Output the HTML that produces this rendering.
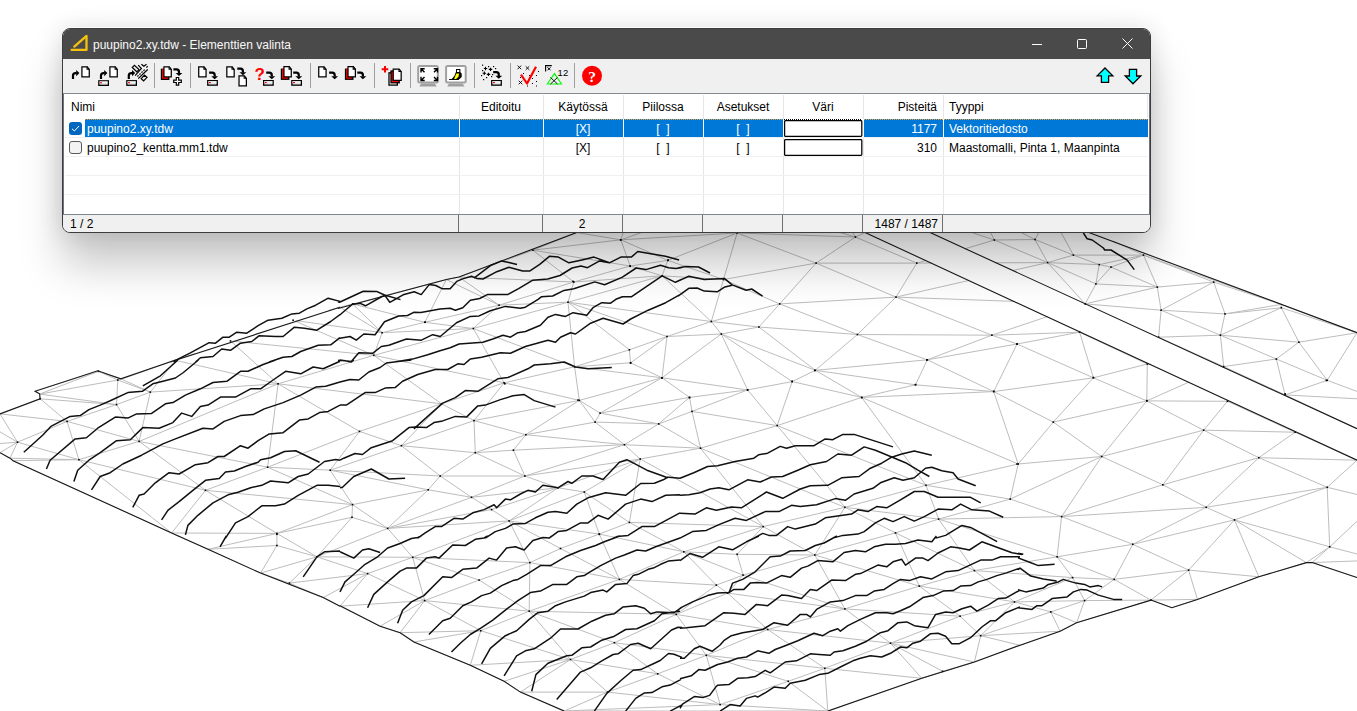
<!DOCTYPE html>
<html><head><meta charset="utf-8">
<style>
html,body{margin:0;padding:0;width:1357px;height:711px;overflow:hidden;background:#fff;}
body{position:relative;font-family:"Liberation Sans",sans-serif;}
.abs{position:absolute;}
#mesh{position:absolute;left:0;top:0;}
#win{position:absolute;left:62px;top:28px;width:1087px;height:203px;border:1px solid #3c3c3c;border-radius:8px;
 box-shadow:0 -1px 0 rgba(255,255,255,0.8),0 32px 44px rgba(0,0,0,0.22),0 0 24px rgba(0,0,0,0.12);background:#f0f0f0;overflow:hidden;}
#title{position:absolute;left:0;top:0;width:1087px;height:30px;background:#4a4a4a;}
#ttext{position:absolute;left:30px;top:9px;color:#f8f8f8;font-size:12px;white-space:nowrap;}
#tb{position:absolute;left:0;top:30px;width:1087px;height:34px;background:#f0f0f0;border-bottom:1px solid #868a93;}
#list{position:absolute;left:0;top:65px;width:1087px;height:120px;background:#fff;}
#status{position:absolute;left:0;top:185px;width:1087px;height:18px;background:#f0f0f0;border-top:1px solid #80848c;}
.t{position:absolute;font-size:12px;white-space:nowrap;color:#000;line-height:14px;}
.vs{position:absolute;width:1px;background:#e6e6e6;}
.hs{position:absolute;height:1px;background:#f0f0f0;}
.sep{position:absolute;width:1px;background:#a0a0a0;top:4px;height:25px;}
</style></head><body>

<svg id="mesh" width="1357" height="711" viewBox="0 0 1357 711">
<path fill="none" stroke="#bdbdbd" stroke-width="1" d="M861.7 397.4 L926 485.3 M232.9 341.2 L373.8 355.3 M980.7 635.7 L1050.8 611.9 M662 377.8 L689.5 397.4 M529.9 562.6 L560.5 548.5 M316.9 556.8 L387.6 528.4 M1206.2 507.3 L1061.6 516.6 M980.7 635.7 L1060.1 631.2 M278.1 383.8 L267.6 467.2 M991.9 335.2 L1047.7 316.5 M1084.6 304.1 L1085.2 303.9 M692 411.4 L777.2 425.6 M1357 332.7 L1357.5 334.2 M1147.3 364 L1150.7 364.2 M1220.3 366.4 L1223.7 366.6 M1099.2 264.6 L1111 267.1 M921.8 678.3 L827.8 711 M676.2 614.4 L767.7 629.5 M619.4 579.4 L716.3 585.1 M150.3 392.1 L175.4 360.3 M474 420.6 L441.5 403.8 M614.4 642.7 L570.5 659.5 M1111 267.1 L1095.9 283.9 M1327.2 380.3 L1357 332.7 M1111 267.1 L1143.5 255.1 M599.3 534.1 L683.8 551.8 M570.5 659.5 L657.7 673.8 M844.9 507.3 L763.2 526.6 M479.1 580.1 L529.2 611.2 M17.5 442.2 L-20 445 M513.4 450.2 L624.4 444.7 M1327.2 487.3 L1329.7 546.8 M584.3 492 L629.4 522.4 M1188.6 570.1 L1258.8 576.8 M78.9 459.7 L171.6 533 M1146.8 400.9 L1053.3 422.1 M1220.4 335.2 L1158.6 337.2 M1146.8 400.9 L1227.5 401.3 M400.1 632.7 L380.1 626.2 M624.4 444.7 L640.2 459 M816.1 263.1 L916.8 263.1 M570.5 659.5 L504.1 681.3 M1298.9 342.2 L1276.3 359 M792.2 381.6 L777.2 425.6 M816.1 263.1 L723.5 279.5 M599.3 534.1 L619.4 579.4 M916.8 263.1 L896 297.1 M424.8 322.3 L382.1 332.7 M630.2 266 L667.8 260.4 M890.5 643.2 L942.6 671.3 M17.5 442.2 L0 452.7 M13 460.7 L10 458.2 M573.8 282 L459 277 M991.9 335.2 L927.3 359.8 M861.7 397.4 L1018.2 464 M1146.8 400.9 L1147.3 364 M316.9 556.8 L352 517.3 M1220.4 335.2 L1281.3 307.7 M10 458.2 L0 452.7 M382.1 332.7 L473.3 328.5 M573.8 282 L568 302.2 M640.2 459 L763.2 526.6 M792.2 381.6 L861.7 397.4 M116.5 404.6 L40.1 398.8 M896 297.1 L969.6 280.3 M1012 270.7 L1047.6 262.6 M558 487.8 L509.1 520.9 M683.8 551.8 L716.3 585.1 M276.9 545.5 L208 549.3 M1203.7 430.2 L1258.8 457.7 M524.9 476 L558 487.8 M479.1 580.1 L424.7 600.6 M1101.7 456.5 L1162.8 484.8 M667.8 260.4 L723.5 279.5 M844.9 507.3 L814.8 555 M630 212 L700 212 M579.3 400.4 L600.1 413.1 M584.3 492 L509.1 520.9 M620.8 239.8 L630 212 M573.8 282 L630.2 266 M619.4 579.4 L529.2 611.2 M640.2 459 L700.5 448.2 M1035 239.5 L1047.6 262.6 M570.5 659.5 L520.4 692.1 M716.3 585.1 L727.6 593.1 M595.1 422.1 L624.4 444.7 M205.5 490.3 L276.9 533.4 M1234.5 519.9 L1329.7 546.8 M171.6 533 L13 460.7 M558 487.8 L584.3 492 M599.3 534.1 L560.5 548.5 M424.8 322.3 L499.1 305.2 M614.4 642.7 L676.2 614.4 M1093.4 377.8 L1146.8 400.9 M824.8 668.3 L827.8 711 M1018.2 464 L1010.2 499.1 M857.4 334.5 L991.9 335.2 M1157.3 287.1 L1161.1 310.2 M629.4 349.8 L574.6 366.8 M446.4 279.5 L459 277 M974.4 570.6 L1057.1 556.8 M1010.2 499.1 L1061.6 516.6 M513.4 450.2 L524.9 476 M991.9 335.2 L1017 344 M788.2 681.3 L720.1 704.6 M78.9 459.7 L205.5 490.3 M1114.2 579.4 L1151 600.1 M267.6 467.2 L359.5 431.4 M440.2 476 L471.5 497.3 M382.1 332.7 L373.8 355.3 M600.1 413.1 L689.5 397.4 M629.4 522.4 L599.3 534.1 M1084.6 600.6 L1050.8 611.9 M994.4 240 L1035 239.5 M116.5 404.6 L150.3 392.1 M1234.5 519.9 L1258.8 576.8 M683.8 551.8 L743.1 575.1 M915.5 384.8 L993.7 391.6 M558 487.8 L491.6 509.6 M276.9 545.5 L260.6 573.1 M1203.7 430.2 L1101.7 456.5 M662.1 275.8 L568 302.2 M1035 239.5 L1050 212 M524.9 476 L471.5 497.3 M662 377.8 L579.3 400.4 M657.7 673.8 L706.3 655.3 M993.7 391.6 L861.7 397.4 M938.6 519.1 L974.4 570.6 M667 336.5 L721.3 334 M662 377.8 L574.6 366.8 M267.6 467.2 L330.2 470.2 M579.3 400.4 L504.1 382.8 M560.5 548.5 L619.4 579.4 M1010.2 499.1 L1101.7 456.5 M938.6 519.1 L1061.6 516.6 M441.5 403.8 L401.4 445.7 M777.2 425.6 L700.5 448.2 M1017 344 L1093.4 377.8 M330.2 470.2 L352.5 504.6 M1223.7 366.6 L1223.9 368.1 M1227.3 399.6 L1227.5 401.3 M620.8 239.8 L737.1 233 M116.5 404.6 L139.1 441.4 M815.3 370.3 L915.5 384.8 M607.6 692.1 L564.3 711 M779.7 303.9 L723.5 279.5 M276.9 533.4 L352 517.3 M564.3 711 L520.4 692.1 M412.7 557.3 L529.9 562.6 M359.5 431.4 L401.4 445.7 M994.4 240 L910 212 M844.9 608.9 L919.3 586.1 M1157.3 287.1 L1085.2 303.9 M620.8 239.8 L576.8 232.5 M640.2 459 L524.9 476 M1162.8 484.8 L1061.6 516.6 M1114.2 579.4 L1084.6 600.6 M1073.4 255.1 L1143.5 255.1 M1061.6 516.6 L1132.8 544.3 M440.2 476 L428.2 489.8 M777.2 425.6 L844.9 507.3 M1050.8 611.9 L1060.1 631.2 M1234.5 519.9 L1188.6 570.1 M779.7 303.9 L758.9 327 M1047.6 262.6 L1095.9 283.9 M1298.9 342.2 L1357 332.7 M1295.1 432.2 L1357 460.2 M1357 577.6 L1357.5 577.2 M1035 239.5 L980 212 M289.4 583.1 L323.2 597.6 M504.1 382.8 L574.6 366.8 M1057.1 556.8 L1072.6 577.6 M855.4 237 L910 212 M1258.8 457.7 L1295.1 432.2 M857.4 334.5 L815.3 370.3 M267.6 467.2 L205.5 490.3 M640.2 459 L584.3 492 M767.7 629.5 L824.8 668.3 M895.5 532.9 L814.8 555 M895.5 532.9 L974.4 570.6 M1014.5 601.9 L1072.6 577.6 M441.5 403.8 L359.5 431.4 M896 297.1 L991.9 335.2 M568 302.2 L574.6 366.8 M1095.9 283.9 L1157.3 287.1 M595.1 422.1 L525.9 434.7 M658.7 423.9 L692 411.4 M743.1 575.1 L844.9 608.9 M657.7 673.8 L607.6 692.1 M919.3 586.1 L960.1 616.2 M367.6 573.6 L323.2 597.6 M276.9 533.4 L352.5 504.6 M276.9 545.5 L316.9 556.8 M1285.1 394.9 L1357.5 398.8 M412.7 557.3 L479.1 580.1 M974.4 570.6 L1014.5 601.9 M938.6 519.1 L895.5 532.9 M844.9 608.9 L890.5 643.2 M1258.8 457.7 L1327.2 487.3 M98.5 371.3 L121.5 379.1 M1017 344 L993.7 391.6 M890.5 643.2 L921.8 678.3 M1162.8 484.8 L1206.2 507.3 M568 302.2 L473.3 328.5 M1151 600.1 L1171.8 607.7 M340 606.2 L323.2 597.6 M1061.6 516.6 L1057.1 556.8 M67.1 421.4 L0 413.9 M991.9 335.2 L1079.6 332.2 M440.2 476 L524.9 476 M1014.5 601.9 L1050.8 611.9 M529.2 611.2 L570.5 659.5 M896 297.1 L779.7 303.9 M330.2 470.2 L440.2 476 M509.1 520.9 L412.7 557.3 M1050.8 611.9 L1076.6 622.7 M667.8 260.4 L662.1 275.8 M473.3 328.5 L504.1 382.8 M779.7 303.9 L711.3 321.5 M814.8 555 L844.9 608.9 M737.1 233 L770 212 M352.7 304 L340 307.2 M747.6 389.9 L689.5 397.4 M480.8 630.7 L570.5 659.5 M352.5 504.6 L352 517.3 M1010.2 499.1 L938.6 519.1 M412.7 557.3 L424.7 600.6 M844.9 608.9 L767.7 629.5 M855.4 237 L840 212 M1161.1 310.2 L1158.6 337.2 M1072.6 577.6 L1114.2 579.4 M352 517.3 L387.6 528.4 M640.2 459 L558 487.8 M1017 344 L927.3 359.8 M737.1 233 L723.5 279.5 M1158.6 337.2 L1223.7 366.6 M620.8 239.8 L630.2 266 M373.8 355.3 L473.3 328.5 M380.1 626.2 L340 606.2 M927.3 359.8 L815.3 370.3 M896 297.1 L857.4 334.5 M474 420.6 L525.9 434.7 M1357 577.6 L1312.2 562.6 M67.1 421.4 L78.9 459.7 M1276.3 359 L1327.2 380.3 M509.1 520.9 L560.5 548.5 M1276.3 359 L1285.1 394.9 M743.1 575.1 L814.8 555 M919.3 586.1 L974.4 570.6 M1327.2 380.3 L1357.5 391.6 M576.8 232.5 L630 212 M700 212 L770 212 M39.6 394.1 L35.1 390.9 M747.6 389.9 L777.2 425.6 M412.7 557.3 L367.6 573.6 M1079.6 332.2 L1147.3 364 M1258.8 457.7 L1162.8 484.8 M352.7 304 L382.1 332.7 M17.5 442.2 L78.9 459.7 M98.5 371.3 L35.1 390.9 M600.1 413.1 L658.7 423.9 M424.7 600.6 L480.8 630.7 M706.3 655.3 L720.1 704.6 M1073.4 255.1 L1099.2 264.6 M1327.2 487.3 L1357 460.2 M1060.1 631.2 L1020 645.3 M1151 600.1 L1197.4 599.4 M529.2 611.2 L614.4 642.7 M824.8 668.3 L890.5 643.2 M150.3 392.1 L121.5 379.1 M1357 428.7 L1357.5 428.1 M926 485.3 L844.9 507.3 M737.1 233 L700 212 M194.4 353.6 L175.4 360.3 M614.4 642.7 L706.3 655.3 M475.3 452.7 L513.4 450.2 M916.8 263.1 L932.2 263 M994.8 262.8 L1047.6 262.6 M17.5 442.2 L-20 420 M1161.1 310.2 L1220.4 335.2 M529.9 562.6 L529.2 611.2 M1018.2 464 L1101.7 456.5 M737.1 233 L816.1 263.1 M721.3 334 L747.6 389.9 M1213.7 282.1 L1281.3 304.4 M278.1 383.8 L373.8 355.3 M529.2 611.2 L676.2 614.4 M474 420.6 L475.3 452.7 M67.1 421.4 L17.5 442.2 M509.1 520.9 L529.9 562.6 M401.4 445.7 L440.2 476 M1276.3 359 L1223.7 366.6 M890.5 643.2 L980.7 635.7 M17.5 442.2 L10 458.2 M475.3 452.7 L524.9 476 M758.9 327 L857.4 334.5 M747.6 389.9 L692 411.4 M1188.6 570.1 L1151 600.1 M1161.1 310.2 L1213.7 282.1 M662 377.8 L721.3 334 M993.7 391.6 L1093.4 377.8 M763.2 526.6 L737.1 554.3 M424.7 600.6 L529.2 611.2 M706.3 655.3 L788.2 681.3 M316.9 556.8 L367.6 573.6 M1073.4 255.1 L1047.6 262.6 M116.5 404.6 L39.6 394.1 M658.7 423.9 L624.4 444.7 M1298.9 342.2 L1281.3 307.7 M205.5 490.3 L171.6 533 M629.4 522.4 L763.2 526.6 M788.2 681.3 L827.8 711 M401.4 445.7 L475.3 452.7 M428.2 489.8 L387.6 528.4 M630.6 362.8 L574.6 366.8 M424.7 600.6 L340 606.2 M504.1 681.3 L470.3 665.3 M504.1 382.8 L441.5 403.8 M382.1 332.7 L340 307.2 M758.9 327 L815.3 370.3 M1327.2 487.3 L1234.5 519.9 M1161.1 310.2 L1225 313.9 M139.1 441.4 L205.5 490.3 M579.3 400.4 L525.9 434.7 M662.1 275.8 L723.5 279.5 M763.2 526.6 L814.8 555 M1076.6 622.7 L1060.1 631.2 M267.6 467.2 L352.5 504.6 M980.7 635.7 L974.4 662 M1035 239.5 L1073.4 255.1 M-20 420 L-20 445 M737.1 554.3 L743.1 575.1 M474 420.6 L401.4 445.7 M260.6 573.1 L208 549.3 M1073.4 255.1 L1050 212 M1227.5 401.3 L1295.1 432.2 M824.8 668.3 L921.8 678.3 M916.8 263.1 L926.2 260.3 M964.6 248.9 L994.4 240 M150.3 392.1 L278.1 383.8 M1132.8 544.3 L1114.2 579.4 M205.5 490.3 L352.5 504.6 M1329.7 546.8 L1357.5 554.1 M1018.2 464 L926 485.3 M844.9 507.3 L895.5 532.9 M1101.7 456.5 L1061.6 516.6 M520.4 692.1 L504.1 681.3 M758.9 327 L721.3 334 M579.3 400.4 L474 420.6 M861.7 397.4 L777.2 425.6 M1085.2 303.9 L1161.1 310.2 M938.6 519.1 L1057.1 556.8 M763.2 526.6 L683.8 551.8 M1146.8 400.9 L1101.7 456.5 M706.3 655.3 L824.8 668.3 M316.9 556.8 L412.7 557.3 M624.4 444.7 L524.9 476 M276.9 533.4 L171.6 533 M816.1 263.1 L779.7 303.9 M1084.6 600.6 L1151 600.1 M1084.6 600.6 L1076.6 622.7 M1329.7 546.8 L1306.4 562.6 M1234.5 519.9 L1306.4 562.6 M619.4 579.4 L683.8 551.8 M683.8 551.8 L737.1 554.3 M700.5 448.2 L763.2 526.6 M630.6 362.8 L662 377.8 M424.8 322.3 L473.3 328.5 M323.2 597.6 L260.6 573.1 M960.1 616.2 L980.7 635.7 M1203.7 430.2 L1295.1 432.2 M711.3 321.5 L721.3 334 M316.9 556.8 L260.6 573.1 M295.2 321.1 L373.8 355.3 M727.6 593.1 L767.7 629.5 M1143.5 255.1 L1112.9 241 M1088.2 229.6 L1050 212 M139.1 441.4 L267.6 467.2 M974.4 570.6 L1072.6 577.6 M579.3 400.4 L574.6 366.8 M1146.8 400.9 L1189.2 382 M1222.1 367.3 L1223.7 366.6 M387.6 528.4 L509.1 520.9 M980.7 635.7 L1020 645.3 M1017 344 L1079.6 332.2 M40.1 398.8 L39.6 394.1 M1099.2 264.6 L1095.9 283.9 M424.8 322.3 L352.7 304 M614.4 642.7 L657.7 673.8 M629.4 349.8 L667 336.5 M150.3 392.1 L139.1 441.4 M499.1 305.2 L459 277 M657.7 673.8 L720.1 704.6 M711.3 321.5 L723.5 279.5 M844.9 507.3 L938.6 519.1 M316.9 556.8 L289.4 583.1 M532.9 250.2 L576.8 232.5 M1085.2 303.9 L1085.1 304.3 M1079.8 331.3 L1079.6 332.2 M1258.8 457.7 L1357 460.2 M1220.4 335.2 L1276.3 359 M1146.8 400.9 L1203.7 430.2 M387.6 528.4 L412.7 557.3 M1220.4 335.2 L1223.7 366.6 M573.8 282 L662.1 275.8 M276.9 533.4 L208 549.3 M816.1 263.1 L896 297.1 M117.8 380 L121.5 379.1 M1234.5 519.9 L1132.8 544.3 M1225 313.9 L1281.3 304.4 M1329.7 546.8 L1312.2 562.6 M700.5 448.2 L844.9 507.3 M17.5 442.2 L0 413.9 M1203.7 430.2 L1227.5 401.3 M711.3 321.5 L758.9 327 M667.8 260.4 L737.1 233 M840 212 L910 212 M857.4 334.5 L927.3 359.8 M993.7 391.6 L1018.2 464 M1312.2 562.6 L1357.5 560.9 M1213.7 282.1 L1143.5 255.1 M121.5 379.1 L175.4 360.3 M667 336.5 L711.3 321.5 M499.1 305.2 L473.3 328.5 M767.7 629.5 L706.3 655.3 M895.5 532.9 L919.3 586.1 M1281.3 304.4 L1357 332.7 M387.6 528.4 L491.6 509.6 M974.4 662 L921.8 678.3 M573.8 282 L499.1 305.2 M1223.7 366.6 L1285.1 394.9 M619.4 579.4 L676.2 614.4 M40.1 398.8 L0 413.9 M994.4 240 L1047.6 262.6 M815.3 370.3 L792.2 381.6 M367.6 573.6 L340 606.2 M1312.2 562.6 L1306.4 562.6 M629.4 349.8 L630.6 362.8 M1203.7 430.2 L1162.8 484.8 M1093.4 377.8 L1053.3 422.1 M499.1 305.2 L446.4 279.5 M1132.8 544.3 L1188.6 570.1 M662 377.8 L600.1 413.1 M1157.3 287.1 L1213.7 282.1 M770 212 L840 212 M1281.3 307.7 L1357 332.7 M1157.3 287.1 L1143.5 255.1 M0 452.7 L-20 445 M579.3 400.4 L595.1 422.1 M413.9 642 L400.1 632.7 M890.5 643.2 L974.4 662 M767.7 629.5 L890.5 643.2 M620.8 239.8 L700 212 M78.9 459.7 L139.1 441.4 M532.9 250.2 L459 277 M1220.4 335.2 L1298.9 342.2 M480.8 630.7 L400.1 632.7 M927.3 359.8 L993.7 391.6 M777.2 425.6 L926 485.3 M1020 645.3 L974.4 662 M1327.2 380.3 L1285.1 394.9 M595.1 422.1 L658.7 423.9 M568 302.2 L711.3 321.5 M815.3 370.3 L861.7 397.4 M1047.6 262.6 L1099.2 264.6 M896 297.1 L1015.1 301.4 M1084.2 303.9 L1085.2 303.9 M473.3 328.5 L574.6 366.8 M1357 460.2 L1357.5 461.1 M1093.4 377.8 L1147.3 364 M855.4 237 L770 212 M1057.1 556.8 L1132.8 544.3 M844.9 608.9 L960.1 616.2 M1143.5 255.1 L1281.3 304.4 M525.9 434.7 L624.4 444.7 M367.6 573.6 L424.7 600.6 M470.3 665.3 L413.9 642 M568 302.2 L667 336.5 M289.4 583.1 L367.6 573.6 M855.4 237 L916.8 263.1 M330.2 470.2 L401.4 445.7 M532.9 250.2 L630.2 266 M624.4 444.7 L700.5 448.2 M1053.3 422.1 L1101.7 456.5 M743.1 575.1 L727.6 593.1 M116.5 404.6 L67.1 421.4 M779.7 303.9 L857.4 334.5 M1047.6 262.6 L1085.2 303.9 M915.5 384.8 L861.7 397.4 M98.5 371.3 L39.6 394.1 M600.1 413.1 L595.1 422.1 M1281.3 307.7 L1281.3 304.4 M1225 313.9 L1281.3 307.7 M529.2 611.2 L480.8 630.7 M1014.5 601.9 L1084.6 600.6 M480.8 630.7 L413.9 642 M278.1 383.8 L359.5 431.4 M927.3 359.8 L915.5 384.8 M509.1 520.9 L599.3 534.1 M117.8 380 L39.6 394.1 M658.7 423.9 L700.5 448.2 M926 485.3 L1010.2 499.1 M607.6 692.1 L520.4 692.1 M117.8 380 L150.3 392.1 M720.1 704.6 L564.3 711 M814.8 555 L919.3 586.1 M475.3 452.7 L525.9 434.7 M471.5 497.3 L491.6 509.6 M994.4 240 L980 212 M525.9 434.7 L513.4 450.2 M737.1 233 L855.4 237 M721.3 334 L792.2 381.6 M1225 313.9 L1220.4 335.2 M640.2 459 L629.4 522.4 M620.8 239.8 L532.9 250.2 M1327.2 487.3 L1357.5 494.6 M855.4 237 L816.1 263.1 M942.6 671.3 L921.8 678.3 M330.2 470.2 L359.5 431.4 M532.9 250.2 L573.8 282 M330.2 470.2 L428.2 489.8 M276.9 533.4 L316.9 556.8 M428.2 489.8 L471.5 497.3 M67.1 421.4 L40.1 398.8 M658.7 423.9 L689.5 397.4 M743.1 575.1 L716.3 585.1 M208 549.3 L171.6 533 M471.5 497.3 L558 487.8 M1285.1 394.9 L1357 428.7 M475.3 452.7 L440.2 476 M1079.6 332.2 L1093.4 377.8 M289.4 583.1 L260.6 573.1 M1057.1 556.8 L1114.2 579.4 M278.1 383.8 L175.4 360.3 M78.9 459.7 L10 458.2 M1225 313.9 L1213.7 282.1 M278.1 383.8 L231.3 341.7 M568 302.2 L499.1 305.2 M824.8 668.3 L788.2 681.3 M676.2 614.4 L727.6 593.1 M480.8 630.7 L470.3 665.3 M373.8 355.3 L441.5 403.8 M278.1 383.8 L441.5 403.8 M1095.9 283.9 L1085.2 303.9 M424.7 600.6 L380.1 626.2 M117.8 380 L116.5 404.6 M919.3 586.1 L1014.5 601.9 M720.1 704.6 L827.8 711 M471.5 497.3 L387.6 528.4 M504.1 382.8 L474 420.6 M0 413.9 L-20 420 M1258.8 576.8 L1197.4 599.4 M1258.8 457.7 L1206.2 507.3 M529.9 562.6 L619.4 579.4 M1018.2 464 L1053.3 422.1 M1014.5 601.9 L980.7 635.7 M721.3 334 L815.3 370.3 M1206.2 507.3 L1234.5 519.9 M689.5 397.4 L692 411.4 M1197.4 599.4 L1171.8 607.7 M424.8 322.3 L446.4 279.5 M910 212 L980 212 M568 302.2 L629.4 349.8 M692 411.4 L700.5 448.2 M1151 600.1 L1076.6 622.7 M373.8 355.3 L504.1 382.8 M942.6 671.3 L974.4 662 M676.2 614.4 L706.3 655.3 M1099.2 264.6 L1143.5 255.1 M328.4 310.4 L340 307.2 M980 212 L1050 212 M629.4 522.4 L683.8 551.8 M276.9 533.4 L276.9 545.5 M1111 267.1 L1157.3 287.1 M926 485.3 L938.6 519.1 M1329.7 546.8 L1357.5 520.9 M352.7 304 L446.4 279.5 M570.5 659.5 L607.6 692.1 M890.5 643.2 L960.1 616.2 M1188.6 570.1 L1114.2 579.4 M352.5 504.6 L387.6 528.4 M827.8 711 L564.3 711 M662.1 275.8 L711.3 321.5 M584.3 492 L599.3 534.1 M1188.6 570.1 L1197.4 599.4 M662 377.8 L747.6 389.9 M491.6 509.6 L509.1 520.9 M78.9 459.7 L13 460.7 M993.7 391.6 L1053.3 422.1 M1072.6 577.6 L1084.6 600.6 M1206.2 507.3 L1132.8 544.3 M98.5 371.3 L117.8 380 M607.6 692.1 L720.1 704.6 M620.8 239.8 L667.8 260.4 M570.5 659.5 L470.3 665.3 M792.2 381.6 L747.6 389.9 M1298.9 342.2 L1327.2 380.3 M737.1 554.3 L814.8 555 M676.2 614.4 L716.3 585.1 M1306.4 562.6 L1258.8 576.8 M630.6 362.8 L667 336.5 M67.1 421.4 L139.1 441.4 M428.2 489.8 L352.5 504.6 M960.1 616.2 L1014.5 601.9 M424.7 600.6 L400.1 632.7 M630.2 266 L662.1 275.8 M667 336.5 L662 377.8 M479.1 580.1 L529.9 562.6 M296.6 320.7 L382.1 332.7 M727.6 593.1 L844.9 608.9 M1327.2 487.3 L1206.2 507.3 M139.1 441.4 L278.1 383.8"/><g fill="#000"><rect x="97.7" y="370.5" width="1.6" height="1.6"/><rect x="117" y="379.2" width="1.6" height="1.6"/><rect x="115.7" y="403.8" width="1.6" height="1.6"/><rect x="149.5" y="391.3" width="1.6" height="1.6"/><rect x="66.3" y="420.6" width="1.6" height="1.6"/><rect x="16.7" y="441.4" width="1.6" height="1.6"/><rect x="78.1" y="458.9" width="1.6" height="1.6"/><rect x="138.3" y="440.6" width="1.6" height="1.6"/><rect x="277.3" y="383" width="1.6" height="1.6"/><rect x="266.8" y="466.4" width="1.6" height="1.6"/><rect x="204.7" y="489.5" width="1.6" height="1.6"/><rect x="329.4" y="469.4" width="1.6" height="1.6"/><rect x="276.1" y="532.6" width="1.6" height="1.6"/><rect x="39.3" y="398" width="1.6" height="1.6"/><rect x="292.3" y="319.4" width="1.6" height="1.6"/><rect x="229.7" y="340.2" width="1.6" height="1.6"/><rect x="276.1" y="533.5" width="1.6" height="1.6"/><rect x="276.1" y="544.7" width="1.6" height="1.6"/><rect x="316.1" y="556" width="1.6" height="1.6"/><rect x="288.6" y="582.3" width="1.6" height="1.6"/><rect x="620" y="239" width="1.6" height="1.6"/><rect x="532.1" y="249.4" width="1.6" height="1.6"/><rect x="573" y="281.2" width="1.6" height="1.6"/><rect x="629.4" y="265.2" width="1.6" height="1.6"/><rect x="667" y="259.6" width="1.6" height="1.6"/><rect x="661.3" y="275" width="1.6" height="1.6"/><rect x="424" y="321.5" width="1.6" height="1.6"/><rect x="351.9" y="303.2" width="1.6" height="1.6"/><rect x="619.8" y="239.2" width="1.6" height="1.6"/><rect x="629.3" y="265.5" width="1.6" height="1.6"/><rect x="667.4" y="259.3" width="1.6" height="1.6"/><rect x="572.2" y="280.6" width="1.6" height="1.6"/><rect x="567.2" y="301.4" width="1.6" height="1.6"/><rect x="498.3" y="304.4" width="1.6" height="1.6"/><rect x="424.4" y="321.4" width="1.6" height="1.6"/><rect x="381.3" y="331.9" width="1.6" height="1.6"/><rect x="373" y="354.5" width="1.6" height="1.6"/><rect x="472.5" y="327.7" width="1.6" height="1.6"/><rect x="628.6" y="349" width="1.6" height="1.6"/><rect x="629.8" y="362" width="1.6" height="1.6"/><rect x="666.2" y="335.7" width="1.6" height="1.6"/><rect x="661.2" y="377" width="1.6" height="1.6"/><rect x="578.5" y="399.6" width="1.6" height="1.6"/><rect x="503.3" y="382" width="1.6" height="1.6"/><rect x="629.8" y="362.2" width="1.6" height="1.6"/><rect x="661.2" y="377.2" width="1.6" height="1.6"/><rect x="504.1" y="383" width="1.6" height="1.6"/><rect x="577.2" y="399.3" width="1.6" height="1.6"/><rect x="599.3" y="412.3" width="1.6" height="1.6"/><rect x="594.3" y="421.3" width="1.6" height="1.6"/><rect x="657.9" y="423.1" width="1.6" height="1.6"/><rect x="473.2" y="419.8" width="1.6" height="1.6"/><rect x="440.7" y="403" width="1.6" height="1.6"/><rect x="358.7" y="430.6" width="1.6" height="1.6"/><rect x="400.6" y="444.9" width="1.6" height="1.6"/><rect x="474.5" y="451.9" width="1.6" height="1.6"/><rect x="525.1" y="433.9" width="1.6" height="1.6"/><rect x="512.6" y="449.4" width="1.6" height="1.6"/><rect x="623.6" y="443.9" width="1.6" height="1.6"/><rect x="639.4" y="458.2" width="1.6" height="1.6"/><rect x="439.4" y="475.2" width="1.6" height="1.6"/><rect x="524.1" y="475.2" width="1.6" height="1.6"/><rect x="427.4" y="489" width="1.6" height="1.6"/><rect x="470.7" y="496.5" width="1.6" height="1.6"/><rect x="557.2" y="487" width="1.6" height="1.6"/><rect x="583.5" y="491.2" width="1.6" height="1.6"/><rect x="351.7" y="503.8" width="1.6" height="1.6"/><rect x="351.2" y="516.5" width="1.6" height="1.6"/><rect x="386.8" y="527.6" width="1.6" height="1.6"/><rect x="490.8" y="508.8" width="1.6" height="1.6"/><rect x="508.3" y="520.1" width="1.6" height="1.6"/><rect x="628.6" y="521.6" width="1.6" height="1.6"/><rect x="598.5" y="533.3" width="1.6" height="1.6"/><rect x="573.8" y="366" width="1.6" height="1.6"/><rect x="411.9" y="556.5" width="1.6" height="1.6"/><rect x="366.8" y="572.8" width="1.6" height="1.6"/><rect x="478.3" y="579.3" width="1.6" height="1.6"/><rect x="529.1" y="561.8" width="1.6" height="1.6"/><rect x="559.7" y="547.7" width="1.6" height="1.6"/><rect x="598.5" y="533.5" width="1.6" height="1.6"/><rect x="618.6" y="578.6" width="1.6" height="1.6"/><rect x="423.9" y="599.8" width="1.6" height="1.6"/><rect x="528.4" y="610.4" width="1.6" height="1.6"/><rect x="480" y="629.9" width="1.6" height="1.6"/><rect x="613.6" y="641.9" width="1.6" height="1.6"/><rect x="569.7" y="658.7" width="1.6" height="1.6"/><rect x="656.9" y="673" width="1.6" height="1.6"/><rect x="606.8" y="691.3" width="1.6" height="1.6"/><rect x="675.4" y="613.6" width="1.6" height="1.6"/><rect x="736.3" y="232.2" width="1.6" height="1.6"/><rect x="854.6" y="236.2" width="1.6" height="1.6"/><rect x="815.3" y="262.3" width="1.6" height="1.6"/><rect x="916" y="262.3" width="1.6" height="1.6"/><rect x="895.2" y="296.3" width="1.6" height="1.6"/><rect x="778.9" y="303.1" width="1.6" height="1.6"/><rect x="710.5" y="320.7" width="1.6" height="1.6"/><rect x="758.1" y="326.2" width="1.6" height="1.6"/><rect x="720.5" y="333.2" width="1.6" height="1.6"/><rect x="856.6" y="333.7" width="1.6" height="1.6"/><rect x="991.1" y="334.4" width="1.6" height="1.6"/><rect x="1016.2" y="343.2" width="1.6" height="1.6"/><rect x="926.5" y="359" width="1.6" height="1.6"/><rect x="814.5" y="369.5" width="1.6" height="1.6"/><rect x="791.4" y="380.8" width="1.6" height="1.6"/><rect x="746.8" y="389.1" width="1.6" height="1.6"/><rect x="914.7" y="384" width="1.6" height="1.6"/><rect x="992.9" y="390.8" width="1.6" height="1.6"/><rect x="860.9" y="396.6" width="1.6" height="1.6"/><rect x="688.7" y="396.6" width="1.6" height="1.6"/><rect x="993.6" y="239.2" width="1.6" height="1.6"/><rect x="722.7" y="278.7" width="1.6" height="1.6"/><rect x="926" y="359.2" width="1.6" height="1.6"/><rect x="814" y="369.7" width="1.6" height="1.6"/><rect x="791.4" y="380.5" width="1.6" height="1.6"/><rect x="746.8" y="389.3" width="1.6" height="1.6"/><rect x="914.7" y="383.8" width="1.6" height="1.6"/><rect x="860.9" y="396.8" width="1.6" height="1.6"/><rect x="992.9" y="390.5" width="1.6" height="1.6"/><rect x="688.7" y="396.8" width="1.6" height="1.6"/><rect x="691.2" y="410.6" width="1.6" height="1.6"/><rect x="776.4" y="424.8" width="1.6" height="1.6"/><rect x="699.7" y="447.4" width="1.6" height="1.6"/><rect x="1017.4" y="463.2" width="1.6" height="1.6"/><rect x="925.2" y="484.5" width="1.6" height="1.6"/><rect x="1009.4" y="498.3" width="1.6" height="1.6"/><rect x="844.1" y="506.5" width="1.6" height="1.6"/><rect x="762.4" y="525.8" width="1.6" height="1.6"/><rect x="937.8" y="518.3" width="1.6" height="1.6"/><rect x="894.7" y="532.1" width="1.6" height="1.6"/><rect x="683" y="551" width="1.6" height="1.6"/><rect x="736.3" y="553.5" width="1.6" height="1.6"/><rect x="742.3" y="574.3" width="1.6" height="1.6"/><rect x="715.5" y="584.3" width="1.6" height="1.6"/><rect x="726.8" y="592.3" width="1.6" height="1.6"/><rect x="814" y="554.2" width="1.6" height="1.6"/><rect x="844.1" y="608.1" width="1.6" height="1.6"/><rect x="766.9" y="628.7" width="1.6" height="1.6"/><rect x="705.5" y="654.5" width="1.6" height="1.6"/><rect x="824" y="667.5" width="1.6" height="1.6"/><rect x="787.4" y="680.5" width="1.6" height="1.6"/><rect x="719.3" y="703.8" width="1.6" height="1.6"/><rect x="889.7" y="642.4" width="1.6" height="1.6"/><rect x="918.5" y="585.3" width="1.6" height="1.6"/><rect x="973.6" y="569.8" width="1.6" height="1.6"/><rect x="959.3" y="615.4" width="1.6" height="1.6"/><rect x="1013.7" y="601.1" width="1.6" height="1.6"/><rect x="979.9" y="634.9" width="1.6" height="1.6"/><rect x="941.8" y="670.5" width="1.6" height="1.6"/><rect x="1034.2" y="238.7" width="1.6" height="1.6"/><rect x="1072.6" y="254.3" width="1.6" height="1.6"/><rect x="1046.8" y="261.8" width="1.6" height="1.6"/><rect x="1098.4" y="263.8" width="1.6" height="1.6"/><rect x="1110.2" y="266.3" width="1.6" height="1.6"/><rect x="1095.1" y="283.1" width="1.6" height="1.6"/><rect x="1156.5" y="286.3" width="1.6" height="1.6"/><rect x="1084.4" y="303.1" width="1.6" height="1.6"/><rect x="1160.3" y="309.4" width="1.6" height="1.6"/><rect x="1224.2" y="313.1" width="1.6" height="1.6"/><rect x="1219.6" y="334.4" width="1.6" height="1.6"/><rect x="1298.1" y="341.4" width="1.6" height="1.6"/><rect x="1275.5" y="358.2" width="1.6" height="1.6"/><rect x="1326.4" y="379.5" width="1.6" height="1.6"/><rect x="1212.9" y="281.3" width="1.6" height="1.6"/><rect x="1280.5" y="306.9" width="1.6" height="1.6"/><rect x="1016.2" y="343.2" width="1.6" height="1.6"/><rect x="1078.8" y="331.4" width="1.6" height="1.6"/><rect x="1092.6" y="377" width="1.6" height="1.6"/><rect x="1146" y="400.1" width="1.6" height="1.6"/><rect x="1146.5" y="363.2" width="1.6" height="1.6"/><rect x="1157.8" y="336.4" width="1.6" height="1.6"/><rect x="1222.9" y="365.8" width="1.6" height="1.6"/><rect x="1284.3" y="394.1" width="1.6" height="1.6"/><rect x="1142.7" y="254.3" width="1.6" height="1.6"/><rect x="1092.6" y="376.7" width="1.6" height="1.6"/><rect x="1146" y="399.8" width="1.6" height="1.6"/><rect x="1052.5" y="421.3" width="1.6" height="1.6"/><rect x="1202.9" y="429.4" width="1.6" height="1.6"/><rect x="1100.9" y="455.7" width="1.6" height="1.6"/><rect x="1016.2" y="463.2" width="1.6" height="1.6"/><rect x="1258" y="456.9" width="1.6" height="1.6"/><rect x="1162" y="484" width="1.6" height="1.6"/><rect x="1326.4" y="486.5" width="1.6" height="1.6"/><rect x="1205.4" y="506.5" width="1.6" height="1.6"/><rect x="1060.8" y="515.8" width="1.6" height="1.6"/><rect x="1233.7" y="519.1" width="1.6" height="1.6"/><rect x="1325.6" y="379.7" width="1.6" height="1.6"/><rect x="1284.3" y="393" width="1.6" height="1.6"/><rect x="1226.7" y="400.5" width="1.6" height="1.6"/><rect x="1294.3" y="431.4" width="1.6" height="1.6"/><rect x="1056.3" y="556" width="1.6" height="1.6"/><rect x="1132" y="543.5" width="1.6" height="1.6"/><rect x="1187.8" y="569.3" width="1.6" height="1.6"/><rect x="1071.8" y="576.8" width="1.6" height="1.6"/><rect x="1113.4" y="578.6" width="1.6" height="1.6"/><rect x="1083.8" y="599.8" width="1.6" height="1.6"/><rect x="1150.2" y="599.3" width="1.6" height="1.6"/><rect x="1050" y="611.1" width="1.6" height="1.6"/><rect x="1328.9" y="546" width="1.6" height="1.6"/></g>
<path fill="none" stroke="#1a1a1a" stroke-width="1.1" d="M0 413.9 L40.1 398.8 L39.6 393.8 L35.1 391.3 L97.7 370.8 L120.8 378.8 L175.4 360 M0 452.7 L10 458.2 L13 460.7 L180.4 536.9 M170.5 362 L175.4 360.3 L340 307.2 M178.3 536 L208 549.3 L260.6 573.1 L323.2 597.6 L340 606.2 M338 308.5 L446.4 279.5 L459 277 L576.8 232.5 L589.1 228 M340 605.7 L380.1 626.2 L400.1 632.7 L413.9 642 L470.3 665.3 L504.1 681.3 L520.4 692.1 L564.2 711.1 M827.8 711.1 L921.8 678.3 L974.4 662 L1020 645.2 M1018 645.9 L1060.1 631.2 L1076.6 622.7 L1151 600.1 L1171.8 607.7 L1197.4 599.4 L1258.8 576.8 L1306.4 562.6 L1312.2 562.6 L1357 577.6 M864 232 L1357 460.2 M929 232 L1357 428.7 M1087.5 232 L1357 332.7"/>
<path fill="none" stroke="#111" stroke-width="1.5" stroke-linejoin="round" d="M23.8 452.2 L42.6 435.2 L50.9 426.4 L70.2 416.4 L80.2 415.6 L88.9 409.6 L100.2 405.1 L110.2 400.8 L127.8 392.6 L142.3 391.3 L152.8 383.8 L162.9 381.3 L175.4 378 L183.4 372.5 L198.4 360 M142.8 385.8 L160.4 375.8 L177.9 360 M46.4 469 L50.1 460.2 L75.2 438.9 L86.4 437.7 L97.7 428.2 L115.3 417.1 L127.8 418.1 L136.6 413.9 L151.6 413.4 L165.4 403.8 L172.9 402.6 L185.4 395.1 L200.4 388.8 L213 382.5 L226.8 381.3 L240.5 371.3 L248 371.3 L263.1 364.5 L275.6 360 M73.9 481.5 L77.7 470.2 L88.9 460.2 L100.2 452.7 L116.5 440.7 L130.3 439.7 L142.8 427.6 L159.1 428.2 L172.9 422.6 L181.7 413.1 L191.7 416.4 L200.4 406.4 L208 405.1 L220.5 397.1 L235.5 397.1 L250.6 388.8 L260.6 388.8 L273.1 380 L285.6 371.3 L300.7 373.8 L313.2 367 L323.2 368.8 L340 361.3 M91.5 489.8 L100.2 476.5 L110.2 472.7 L122.8 464 L141.6 455.2 L162.9 443.9 L175.4 438.9 L202.9 428.2 L213 428.9 L224.2 421.4 L240.5 415.6 L253.1 414.6 L264.3 408.9 L283.1 402.6 L300.7 395.1 L315.7 387.1 L325.7 386.3 L340 382 M132.8 507.3 L139.1 495.3 L144.1 494 L155.3 482.8 L169.1 472.7 L179.1 474 L195.4 464.7 L208 462.7 L218 456.5 L224.2 456.5 L240.5 445.7 L248 448.2 L258.1 440.7 L269.3 433.9 L283.1 432.7 L299.4 420.1 L308.2 418.9 L319.5 412.6 L328.2 411.4 L340 405.1 M161.6 519.9 L167.9 510.3 L179.1 501.6 L192.9 490.3 L205.5 480.3 L219.2 478.5 L225.5 472 L234.3 471 L245.5 466.5 L258.1 462.2 L260.6 459.7 L270.6 457.7 L284.4 451.5 L295.7 450.7 L319.5 462.2 M185.4 534.9 L187.9 525.4 L197.9 515.3 L213 502.8 L228 494.8 L238 492.3 L250.6 487.8 L261.8 485.3 L270.6 481 L288.1 482.8 L298.2 476.5 L308.2 474 L324.5 461.5 L335.7 459.5 L340 460.2 M225.5 538.1 L235.5 522.9 L248 516.6 L261.8 505.8 L275.6 505.8 L284.4 504.1 L298.2 495.3 L316.9 485.3 L328.2 485.3 L340 486.5 M173.8 362 L175.4 360.3 L190.4 352.8 L209.2 342.7 L215.5 343.2 L223 337.2 L229.3 337.2 L236.8 332.2 L246.8 333.2 L258.1 325.7 L268.1 320.2 L281.9 318.2 L291.9 313.9 L299.4 313.2 L306.9 308.9 L315.7 305.2 L328.2 298.2 L340 301.4 M195.5 362 L200.4 357.8 L213 356.5 L221.7 349 L230.5 350.3 L240.5 343.2 L251.8 341.5 L259.3 335.7 L275.6 336.5 L283.1 336.5 L294.4 327.2 L304.4 328.2 L316.9 330.2 L330.7 321.5 L340 314.7 M269.1 362 L270.6 361.5 L283.1 357.3 L291.9 356.5 L300.7 351.5 L318.2 345.3 L330.7 344.8 L340 337.7 M220 546.8 L226.3 536 M303.2 576.8 L316.9 556.8 L324.5 551.8 L340 551 M338 301.8 L339.5 302.3 L363.3 291.2 L376.6 291.4 L384.5 295 L400.5 299.6 M338 316 L341.2 313.8 L352.7 304 L360.2 303.4 L365.5 305.8 L381.9 296.5 L385 295.6 L389.8 302.3 L397.8 297.9 L403.1 294.8 L414.2 291.7 L421.2 294.6 L429.2 284.6 L435.8 285.5 L442 288.7 L450.1 288.7 L456.7 281.4 L462.6 278.9 L471.5 276.2 L476.6 278.4 L483 279 L496.8 271.7 L508.9 267.3 L522.7 270.9 L530 270.9 L539.7 264.4 L549.4 256.3 L558.4 257.1 L568.9 262.8 L581.9 259.9 L594 257.1 L609.4 262.8 L620.8 257.1 L631.3 257.1 L637.8 251.5 L665.4 256.3 L679.1 259.9 M474 278.2 L491.1 265.2 L501.6 260.9 L508.9 262.5 L517 264.4 M338 338.6 L340 338.2 L350 336.5 L356.3 340.2 L363.8 334 L375.1 334.7 L384.5 321.7 L398.7 316 L407.5 315.5 L413.7 312.3 L420.8 312.4 L440 308.9 L450.2 308.2 L455.3 310.2 L462.8 307.7 L470.3 300.2 L479.7 298.5 L487.8 294.4 L508.1 294.4 L518.6 288.7 L532.4 280.3 L547.8 279 L560 275.5 L572.1 268 L581 266.1 L587.5 267.7 L599.6 260.9 L609.4 262.8 M338 360.6 L340 360.3 L351.3 361.5 L358.8 352.8 L372.6 353.3 L381.3 346.5 L388.9 345.3 L406.4 339 L421.4 340.2 L432.7 334.7 L440.2 336.5 L456.5 322.7 L470.3 316.4 L479.1 315.9 L490.3 310.7 L505.4 306.4 L520.4 308.2 L525.4 307.2 L538.1 299.3 L541.3 296.8 L552.7 296 L564 290.4 L573.8 288.7 L594.8 281.9 L604.6 284.7 L622.4 277.1 L636.2 268 L645.9 269.6 L660.5 265.2 L668.6 267.7 L675.9 268.5 L682 267.4 M394.5 362 L412.5 359.1 L427.7 354.8 L440 350.7 L450.2 347.8 L459 344 L482.8 342.3 L492.8 339 L502.9 335.2 L510.4 337.2 L517.9 332.7 L525.4 331.5 L540.4 325.2 L548 317.2 L555.5 314.4 L565.5 316.4 L573 312.7 L586.8 315.2 L593 307.7 L601.8 302.7 L610.6 303.2 L615.9 299.3 L622.4 296.8 L631.3 296.8 L662.1 275.8 L675.4 282.3 L682 279.3 M467 362 L470.3 359 L481.6 357.3 L500.4 352.8 L510.4 353.3 L525.4 346.5 L548 340.2 L555.5 342.3 L560.5 337.2 L570.5 332.7 L575.5 334 L590.6 323.2 L603.1 318.2 L623.1 324 L630.7 319 L648.2 310.2 L665.7 302.7 L680 294.6 L682 293.3 M340 360 L345 360.8 L351.3 362 L353.8 360 M340 382 L350 379.5 L358.8 380 L368.8 372 L380.1 367.5 L386.4 363 L400.1 361.3 L411.4 360 M340 405.1 L346.3 405.1 L365.1 392.6 L375.1 392.6 L385.1 388.1 L395.1 387.6 L402.6 381.3 L417.7 374.5 L435.2 369.5 L447.7 369.5 L457.8 363.8 L464 364.5 L469 360 M340 460.2 L343.8 458.2 L355 453.5 L362.5 454.5 L371.3 447.7 L392.6 440.7 L408.9 427.6 L415.2 427.1 L426.4 427.6 L434 422.6 L442.7 420.9 L455.3 416.4 L466.5 417.1 L477.8 405.9 L485.3 405.1 L500.4 399.6 L512.9 395.8 L524.2 394.6 L534.2 400.6 L555.5 407.1 M413.9 428.9 L427.7 416.4 L442.7 403.1 L455.3 397.6 L465.3 390.6 L477.8 391.3 L487.8 385.1 L497.8 378.8 L507.9 377.5 L527.9 368.8 L534.2 365 L550.5 363.8 L564.2 362 L575.5 367 L588 368.8 L611.8 367.5 M340 487.8 L342.5 487.3 L353.8 476.5 L371.3 469 L388.9 479 L405.1 478.3 M417.7 538.1 L425.2 532.9 L435.2 526.6 L441.5 526.6 L454 518.3 L462.8 519.1 L472.8 512.8 L484.1 509.6 L494.1 504.8 L496.6 507.8 L505.4 499.1 L510.4 499.8 L520.4 494 L527.9 490.3 L535.4 492 L542.9 485.3 L558 487.8 L568 481.5 L571.8 483.3 L581.8 476 L593.1 476 L603.1 479.5 L619.4 462.2 L626.9 459.7 L646.9 470.2 L665.7 477 L680 478.3 M485.3 538.1 L495.3 531.6 L505.4 528.4 L512.9 524.1 L525.4 523.4 L535.4 517.8 L548 512.3 L555.5 511.6 L566.8 513.3 L576.8 504.1 L588 497.8 L605.6 492.8 L625.6 495.3 L640.7 483.5 L654.4 483.3 L663.2 479.8 L668.2 477 M549.2 538.1 L558 531.6 L566.8 530.4 L580.5 522.9 L588 522.9 L598.1 515.3 L608.1 519.1 L625.6 504.1 L640.7 499.1 L651.9 501.6 L665.7 495.3 L680 494.8 M613.1 538.1 L616.9 536.6 L628.1 535.4 L641.9 526.6 L654.4 526.6 L680 512.8 M340 551.8 L353.8 558.1 L362.5 550 L368.8 548.8 L380.1 552.5 M340 591.9 L345 581.9 L353.8 574.3 L365.1 564.3 L377.6 556.8 L387.6 548 L400.1 543.5 L411.4 538.5 L417.7 537.5 L421.4 536 M367.6 607.7 L373.8 594.4 L387.6 581.9 L400.1 571.1 L406.4 568.1 L416.4 568.1 L426.4 558.1 L435.2 556.8 L439 558.1 L452.7 545 L465.3 545.5 L475.3 539.3 L484.1 538 L487.6 536 M397.6 623.2 L402.6 610.2 L411.4 601.9 L423.9 595.6 L442.7 576.8 L451.5 577.6 L462.8 569.3 L476.6 568.1 L489.1 558.1 L496.6 560.1 L506.6 548 L515.4 546.8 L524.2 550 L532.9 540.5 L542.9 537.5 L549.2 538 L551.7 536 M428.9 634.5 L442.7 620.7 L450.2 618.2 L462.8 605.7 L471.5 601.9 L481.6 595.6 L490.3 593.1 L501.6 585.6 L512.9 580.6 L517.9 579.4 L526.7 574.3 L540.4 565.6 L550.5 565.6 L565.5 556.8 L580.5 550.5 L595.6 545.5 L604.3 541.8 L614.4 538 L619.7 536 M451.5 652 L460.3 643.2 L470.3 634.5 L481.6 627.7 L492.8 620.2 L507.9 608.2 L517.9 600.6 L530.4 592.6 L540.4 591.1 L553 584.4 L566.8 584.4 L576.8 576.8 L584.3 575.6 L588 573.1 L600.6 565.6 L615.6 558.1 L624.4 555 L636.9 550 L645.7 551 L655.7 546.8 L680 538 M481.6 663.8 L490.3 648.3 L505.4 635.7 L516.6 630.7 L529.2 619.4 L537.9 612.7 L548 611.2 L555.5 605.7 L565.5 601.9 L584.3 596.1 L590.6 592.6 L603.1 590.1 L606.8 591.9 L615.6 584.4 L626.9 583.6 L633.1 575.6 L638.2 574.3 L648.2 569.3 L653.2 568.1 L660.7 564.3 L668.2 561.1 L680 560.1 M504.1 675.8 L516.6 655.8 L525.4 650.8 L534.2 648.8 L550.5 638.2 L560.5 629 L578 629 L591.8 621.2 L605.6 615.2 L614.4 613.7 L623.1 606.9 L635.7 605.7 L644.4 608.2 L650.7 613.7 L656.9 611.9 L674.2 612.7 L682 607.1 M531.7 691.3 L535.9 674.6 L548 663.3 L566.8 655.8 L571.8 655.3 L581.8 647.8 L590.6 647 L601.8 640.2 L614.4 636.2 L625.6 629.5 L636.9 628.7 L654.4 620.7 L662 613.7 L680 611.2 M556.7 699.6 L580.5 672.1 L590.6 667.8 L601.8 660.8 L613.1 654.5 L618.1 653.8 L630.6 644.5 L638.2 643.2 L650.7 648.8 L671.5 630 L678 627.2 L682 627.5 M594.3 711.1 L606.8 693.4 L620.6 680.8 L633.1 670.3 L640.7 669.6 L654.4 663.3 L660.2 660.5 L668.5 653.5 L674 654.3 L682 657.4 M625.6 711.1 L635.7 698.4 L644.4 692.9 L651.9 692.6 L662 686.8 L670.2 685.1 L681 679.3 M670.2 711.1 L682 704.8 M678 268.1 L685.7 266.6 L698.6 267 L710 273 M678 281.1 L688.8 276.3 L704.3 279.4 L724.4 278.4 L732.1 284.9 L746.1 290.3 L751.7 289 L762.6 296.2 M678 296.2 L688.8 288.3 L697.1 288 L704.3 291.1 L717.2 291.8 L724.9 286.9 L732.1 285.2 M680 478.3 L693.8 472.7 L707.6 466.5 L717.6 465.7 L735.1 461.5 L753.9 458.2 L758.9 454.7 L767.7 453.2 L780.2 446.4 L786.5 448.2 L795.3 445.7 L814 445.7 L825.3 438.9 L832.8 439.7 L842.9 434.4 L854.1 434.4 L893 446.9 M680 495.3 L688.8 494.8 L700 492.8 L710.1 489 L718.8 487.8 L728.9 489.8 L747.6 479.8 L760.2 482 L771.5 477 L782.7 476.5 L797.8 470.2 L810.3 464.7 L826.6 461.5 L837.8 454 L851.6 455.2 L864.2 446.9 L875.4 450.2 L890.5 456.5 L905.5 462.7 L918 470.2 L929.3 476.5 M680 513.3 L695 514.1 L706.3 507.8 L716.3 510.3 L731.4 507.1 L741.4 507.8 L766.4 492 L782.7 498.3 L800.3 489 L810.3 485.8 L827.8 485.3 L841.6 477.8 L859.1 476.5 L870.4 468.2 L881.7 463.2 L891.7 457.2 L901.7 454 L914.3 451 L931.8 455.2 M680 538.1 L692.5 531.6 L706.3 530.4 L720.1 524.1 L735.1 518.3 L746.4 520.4 L765.2 511.6 L779 511.6 L791.5 505.3 L800.3 506.6 L816.6 504.8 L835.3 498.6 L845.4 500.3 L854.1 494 L872.9 488.3 L880.4 482.8 L894.2 477.8 L903 480.3 L914.3 477.8 L925.5 468.2 L931.8 467.2 L941.8 470.7 L953.1 472.7 L958.1 479 L975.7 485.8 M753.9 538.1 L762.7 533.4 L768.9 535.4 L776.5 535.4 L787.7 526.6 L795.3 529.1 L815.3 524.1 L825.3 517.8 L851.6 514.1 L857.9 509.8 L867.9 511.6 L876.7 506.6 L886.7 507.8 L900.5 499.8 L914.3 491.5 L924.3 491.5 L938.1 497.3 L970.6 497.3 L980.7 502.8 M832.8 538.1 L842.9 535.4 L857.9 534.1 L864.2 531.6 L875.4 522.9 L884.2 518.3 L893 521.6 L904.2 516.6 L914.3 521.1 L924.3 516.6 L938.1 509.1 L951.8 509.8 L960.6 504.1 L971.9 509.8 L989.4 511.1 L1003.2 517.3 M935.6 538.1 L945.6 535.4 L961.9 525.4 L970.6 527.4 L990.7 538.1 M680 560.6 L690 553.5 L702.5 557.3 L718.8 546.8 L732.6 549.8 L746.4 541.8 L758.9 536 M728.9 593.1 L732.6 583.1 L742.6 579.4 L755.2 571.8 L770.2 556.8 L780.2 556.1 L790.2 551 L805.3 550.5 L815.3 545.5 L824.1 543 L836.9 536 M680 608.2 L692.5 601.9 L707.6 595.6 L717.6 593.1 L728.9 592.6 L733.9 589.4 L743.9 589.4 L750.2 583.1 L757.7 582.6 L766.4 583.1 L781.5 575.6 L790.2 577.3 L801.5 568.1 L807.8 566.1 L817.8 560.6 L832.8 561.8 L844.1 552.5 L855.4 550.5 L865.4 551.8 L874.2 546.8 L885.5 544.3 L895.5 544.3 L905.5 543.5 L918 540 L931.8 541.8 L936.4 536 M680 628.2 L686.3 627.7 L705.1 625.7 L723.8 612.7 L733.9 613.2 L745.1 614.4 L756.4 604.4 L767.7 605.7 L781.5 595.1 L787.7 595.6 L801.5 598.6 L810.3 589.4 L816.6 590.6 L831.6 580.1 L845.4 580.6 L855.4 574.3 L860.4 573.6 L877.9 565.1 L886.7 566.8 L893 561.8 L901.7 559.3 L905.5 565.1 L915.5 558.1 L923 558.1 L928 560.6 L938.1 553 L950.6 546.8 L959.4 548 L969.4 550 L981.9 541.8 L1012 552.8 L1022 554.5 M680 658.3 L684.3 658.3 L694.3 648.8 L700 646.2 L712.1 651.3 L720.1 645 L723.8 640.7 L731.4 635.7 L742.6 632.7 L762.7 629.5 L774 622.7 L787.7 625.2 L800.3 614.4 L806.5 614.4 L810.3 616.9 L816.6 609.4 L830.3 601.9 L842.9 600.6 L855.4 595.6 L866.7 595.6 L874.2 591.1 L884.2 589.4 L893 583.6 L900.5 579.4 L909.3 580.6 L920.5 576.8 L931.8 578.9 L945.6 571.8 L958.1 570.6 L973.1 563.6 L980.7 560.1 L991.9 560.1 L1000.7 556.8 L1020 556.8 M680 678.8 L691.3 675.8 L698.8 669.6 L705.1 670.3 L717.6 664.5 L727.6 662 L737.6 658.3 L746.4 657 L757.7 650.8 L768.9 653.3 L775.2 649.5 L785.2 645.7 L797.8 640.7 L814 633.2 L822.8 635.7 L830.3 631.2 L837.8 628.7 L840.4 631.2 L847.9 625.7 L860.4 619.4 L875.4 612.7 L886.7 612.7 L893 613.7 L900.5 610.7 L910.5 606.2 L923 597.6 L933.1 595.6 L943.1 591.1 L953.1 590.6 L960.6 586.1 L970.6 585.6 L978.2 581.9 L986.9 579.4 L996.9 575.6 L1005.7 573.1 L1020 568.1 M680 708.4 L682.5 704.1 L694.3 696.6 L703.3 697.4 L709.6 695.4 L716.1 686.6 L717.6 685.3 L728.9 684.6 L737.6 678.3 L747.6 677.8 L755.2 676.6 L765.2 670.3 L770.2 672.8 L785.2 662 L796.5 660.8 L810.3 653.8 L819.1 654.5 L830.3 655.3 L834.1 652 L842.9 650.8 L855.4 646.2 L866.7 641.2 L880.4 632.7 L888 630.7 L898 622.7 L906.8 621.9 L914.3 625.7 L928 627.7 L935.6 614.4 L945.6 611.9 L953.1 612.7 L961.9 608.7 L970.6 606.2 L976.9 611.2 L988.2 605.2 L998.2 598.6 L1005.7 598.1 L1020 590.1 M720.1 711.1 L730.1 704.6 L740.1 705.9 L746.4 698.4 L755.2 695.9 L757.7 697.1 L766.4 692.1 L774 687.1 L785.2 688.3 L790.2 683.3 L805.3 680.3 L819.1 674.6 L827.8 673.3 L840.4 667 L852.9 660.8 L860.4 658.3 L870.4 655.8 L881.7 657 L890.5 653.3 L900.5 647 L906.8 647.8 L913 643.2 L920.5 641.2 L930.6 633.7 L938.1 633.2 L945.6 636.2 L951.8 643.7 L959.4 643.7 L970.6 637.7 L981.9 627 L990.7 620.7 L995.7 620.7 L1005.7 612.7 L1020 606.9 M1083.4 233 L1087.2 238.8 L1092.2 240 L1103.4 248 L1104.7 250 L1111 250 L1127.2 260.1 L1134.3 269.6 M1018 553.2 L1023.3 554.3 M1018 557.9 L1028.3 561.8 L1038.3 565.6 L1054.6 564.3 M1018 569.7 L1020 568.1 L1030.8 576.1 L1043.3 578.9 L1056.6 581.1 M1018 589.7 L1025.8 591.9 L1043.3 588.1 L1048.3 584.4 L1058.3 581.9 L1063.4 579.4 L1067.1 580.6 L1075.9 583.1 L1084.6 584.4 L1089.7 586.9 L1098.4 585.6 L1102.2 586.9 M1018 607.8 L1032 609.4 L1037 605.7 L1042.1 605.7 L1052.1 598.6 L1067.1 596.9 L1073.4 591.9 L1080.9 589.4 L1087.2 590.1 L1098.4 595.1 L1113.5 599.4 L1122.2 599.4 M990.7 538.2 L997.1 541.7"/>
</svg>
<div id="win">
<div id="title">
<svg class="abs" style="left:0px;top:0px" width="30" height="30"><path d="M8.6 20.9H23.5V6.9L11.3 17.6" fill="none" stroke="#f5c20e" stroke-width="2.3" stroke-linecap="round" stroke-linejoin="round"/></svg>
<div id="ttext">puupino2.xy.tdw - Elementtien valinta</div>
<div class="abs" style="left:969px;top:15px;width:10px;height:1px;background:#fff"></div>
<div class="abs" style="left:1014px;top:10px;width:8px;height:8px;border:1px solid #fff;border-radius:1.5px"></div>
<svg class="abs" style="left:1059px;top:9px" width="11" height="11" viewBox="0 0 11 11"><path d="M0.5 0.5 L10.5 10.5 M10.5 0.5 L0.5 10.5" stroke="#fff" stroke-width="1"/></svg>
</div>
<div id="tb">
<div class="sep" style="left:91px"></div>
<div class="sep" style="left:127px"></div>
<div class="sep" style="left:247px"></div>
<div class="sep" style="left:311px"></div>
<div class="sep" style="left:347px"></div>
<div class="sep" style="left:411px"></div>
<div class="sep" style="left:447px"></div>
<div class="sep" style="left:511px"></div>
<svg class="abs" style="left:-63px;top:-59px" width="1357" height="100" viewBox="0 0 1357 100"><path d="M73 79.0V75.5Q73 73.1 75.6 73.1H76.5" fill="none" stroke="#000" stroke-width="2.2"/><path d="M76.2 69.9V76.3L79.4 73.1Z" fill="#000"/><path d="M81.92 66.92H87.30L89.27 69.52V76.97H81.92Z" fill="#fff" stroke="#000" stroke-width="1.25" stroke-linejoin="miter"/><path d="M87.10 66.80V69.30H89.40" fill="none" stroke="#000" stroke-width="1.1"/><path d="M101 79.0V75.5Q101 73.1 103.6 73.1H104.5" fill="none" stroke="#000" stroke-width="2.2"/><path d="M104.2 69.9V76.3L107.4 73.1Z" fill="#000"/><path d="M109.92 66.92H115.30L117.27 69.52V76.97H109.92Z" fill="#fff" stroke="#000" stroke-width="1.25" stroke-linejoin="miter"/><path d="M115.10 66.80V69.30H117.40" fill="none" stroke="#000" stroke-width="1.1"/><rect x="98.85000000000001" y="80.85000000000001" width="9.5" height="4.5" fill="#e2e2e2" stroke="#000" stroke-width="1.3"/><rect x="99.5" y="81.5" width="8.200000000000001" height="1.2" fill="#fff"/><rect x="100.0" y="82.2" width="2" height="1.1" fill="#f00"/><path d="M128.8 79.0V75.5Q128.8 73.1 131.4 73.1H132.3" fill="none" stroke="#000" stroke-width="2.2"/><path d="M132.0 69.9V76.3L135.2 73.1Z" fill="#000"/><rect x="126.85000000000001" y="80.75" width="9.5" height="4.5" fill="#e2e2e2" stroke="#000" stroke-width="1.3"/><rect x="127.5" y="81.39999999999999" width="8.200000000000001" height="1.2" fill="#fff"/><rect x="128.0" y="82.1" width="2" height="1.1" fill="#f00"/><g stroke="#000" stroke-width="1.2" fill="none"><path d="M132.3 67.4L134.4 65.3L139 69.6L136.8 71.8Z"/><path d="M135.1 75.6L141.4 68.6L138.2 65.1"/><path d="M137.4 76.5L144.8 69.5" stroke-dasharray="1.6 1.2"/><path d="M138.2 78.6L147.7 69.5"/><path d="M141.4 64.2L143.9 66.3L146.5 64.2"/><path d="M146.3 67.6L147.7 66.3"/><path d="M141.2 78.6L144.4 75.2L147 77.4L143.6 80.8Z"/></g><rect x="160.80" y="68.70" width="8.6" height="11.3" fill="#000"/><rect x="162.05" y="68.70" width="6.10" height="10.05" fill="#f00"/><path d="M163.93 66.83H169.30L171.28 69.42V76.88H163.93Z" fill="#fff" stroke="#000" stroke-width="1.25" stroke-linejoin="miter"/><path d="M169.10 66.70V69.20H171.40" fill="none" stroke="#000" stroke-width="1.1"/><path d="M173.4 69.4H176.6Q179.0 69.4 179.0 72.0V73.4" fill="none" stroke="#000" stroke-width="2.2"/><path d="M175.6 73.0H182.4L179.0 76.0Z" fill="#000"/><path d="M176.3 77.5h2.4v2.6h2.6v2.4h-2.6v2.6h-2.4v-2.6h-2.6v-2.4h2.6z" fill="#fff" stroke="#000" stroke-width="1.2"/><path d="M198.72 66.92H204.10L206.07 69.52V76.97H198.72Z" fill="#fff" stroke="#000" stroke-width="1.25" stroke-linejoin="miter"/><path d="M203.90 66.80V69.30H206.20" fill="none" stroke="#000" stroke-width="1.1"/><path d="M209.1 72.6H212.29999999999998Q214.7 72.6 214.7 75.19999999999999V76.6" fill="none" stroke="#000" stroke-width="2.2"/><path d="M211.29999999999998 76.19999999999999H218.1L214.7 79.19999999999999Z" fill="#000"/><rect x="207.75" y="80.65" width="9.5" height="4.5" fill="#e2e2e2" stroke="#000" stroke-width="1.3"/><rect x="208.4" y="81.3" width="8.200000000000001" height="1.2" fill="#fff"/><rect x="208.9" y="82" width="2" height="1.1" fill="#f00"/><path d="M226.82 66.92H232.20L234.17 69.52V76.97H226.82Z" fill="#fff" stroke="#000" stroke-width="1.25" stroke-linejoin="miter"/><path d="M232.00 66.80V69.30H234.30" fill="none" stroke="#000" stroke-width="1.1"/><path d="M237.3 68.6H240.5Q242.9 68.6 242.9 71.19999999999999V72.6" fill="none" stroke="#000" stroke-width="2.2"/><path d="M239.5 72.19999999999999H246.3L242.9 75.19999999999999Z" fill="#000"/><path d="M239.03 75.92H244.40L246.38 78.52V85.97H239.03Z" fill="#fff" stroke="#000" stroke-width="1.25" stroke-linejoin="miter"/><path d="M244.20 75.80V78.30H246.50" fill="none" stroke="#000" stroke-width="1.1"/><text x="254.5" y="79.8" font-family="Liberation Sans" font-weight="bold" font-size="17" fill="#f00">?</text><path d="M266.2 72.6H269.4Q271.8 72.6 271.8 75.19999999999999V76.6" fill="none" stroke="#000" stroke-width="2.2"/><path d="M268.4 76.19999999999999H275.2L271.8 79.19999999999999Z" fill="#000"/><rect x="263.65" y="80.65" width="9.5" height="4.5" fill="#e2e2e2" stroke="#000" stroke-width="1.3"/><rect x="264.3" y="81.3" width="8.200000000000001" height="1.2" fill="#fff"/><rect x="264.8" y="82" width="2" height="1.1" fill="#f00"/><rect x="280.80" y="68.60" width="8.6" height="11.3" fill="#000"/><rect x="282.05" y="68.60" width="6.10" height="10.05" fill="#f00"/><path d="M283.93 66.72H289.30L291.28 69.32V76.77H283.93Z" fill="#fff" stroke="#000" stroke-width="1.25" stroke-linejoin="miter"/><path d="M289.10 66.60V69.10H291.40" fill="none" stroke="#000" stroke-width="1.1"/><path d="M293.2 72.6H296.4Q298.8 72.6 298.8 75.19999999999999V76.6" fill="none" stroke="#000" stroke-width="2.2"/><path d="M295.4 76.19999999999999H302.2L298.8 79.19999999999999Z" fill="#000"/><rect x="291.84999999999997" y="80.65" width="9.5" height="4.5" fill="#e2e2e2" stroke="#000" stroke-width="1.3"/><rect x="292.5" y="81.3" width="8.200000000000001" height="1.2" fill="#fff"/><rect x="293.0" y="82" width="2" height="1.1" fill="#f00"/><path d="M318.73 66.92H324.10L326.08 69.52V76.97H318.73Z" fill="#fff" stroke="#000" stroke-width="1.25" stroke-linejoin="miter"/><path d="M323.90 66.80V69.30H326.20" fill="none" stroke="#000" stroke-width="1.1"/><path d="M329.1 72.6H332.3Q334.70000000000005 72.6 334.70000000000005 75.19999999999999V76.6" fill="none" stroke="#000" stroke-width="2.2"/><path d="M331.3 76.19999999999999H338.1L334.70000000000005 79.19999999999999Z" fill="#000"/><rect x="344.90" y="68.60" width="8.6" height="11.3" fill="#000"/><rect x="346.15" y="68.60" width="6.10" height="10.05" fill="#f00"/><path d="M348.02 66.72H353.40L355.38 69.32V76.77H348.02Z" fill="#fff" stroke="#000" stroke-width="1.25" stroke-linejoin="miter"/><path d="M353.20 66.60V69.10H355.50" fill="none" stroke="#000" stroke-width="1.1"/><path d="M357.3 72.6H360.5Q362.90000000000003 72.6 362.90000000000003 75.19999999999999V76.6" fill="none" stroke="#000" stroke-width="2.2"/><path d="M359.5 76.19999999999999H366.3L362.90000000000003 79.19999999999999Z" fill="#000"/><path d="M384 65.9h2v2.3h2.3v2h-2.3v2.3h-2v-2.3h-2.3v-2h2.3z" fill="#f00"/><rect x="389" y="72.8" width="8.3" height="12.3" fill="#fff" stroke="#000" stroke-width="1.3"/><rect x="391" y="71" width="8.2" height="11.8" fill="#f00" stroke="#000" stroke-width="1.3"/><path d="M393.23 69.12H399.20L401.18 71.72V80.47H393.23Z" fill="#fff" stroke="#000" stroke-width="1.25" stroke-linejoin="miter"/><path d="M399.00 69.00V71.50H401.30" fill="none" stroke="#000" stroke-width="1.1"/><rect x="418.2" y="66" width="19.6" height="16.6" rx="1.5" fill="#fff" stroke="#a0a0a0" stroke-width="2"/><path d="M421.2 83.5H434.8L436.7 86.6H419.3Z" fill="#a0a0a0"/><g stroke="#000" stroke-width="1.4" fill="none"><path d="M421 72.5V68.8H424.7M421.3 69.1L424.5 72.3"/><path d="M433.8 68.8H437.5V72.5M437.2 69.1L434 72.3"/><path d="M421 76.8V80.5H424.7M421.3 80.2L424.5 77"/><path d="M433.8 80.5H437.5V76.8M437.2 80.2L434 77"/></g><rect x="446.1" y="66" width="19.6" height="16.6" rx="1.5" fill="#fff" stroke="#a0a0a0" stroke-width="2"/><path d="M449.1 83.5H462.70000000000005L464.6 86.6H447.20000000000005Z" fill="#a0a0a0"/><path d="M456 69h4.4v3.2l1.3 1.2v3.6l-3.2 3h-9.4v-0.9h2.6l2.6-3.2 1.7-4.2z" fill="#000"/><path d="M457 70h2.3v2h-2.3z" fill="#fff"/><path d="M456.3 73.4h2.8l-0.6 3.4-2.4 2.3h-2z" fill="#ff0"/><g fill="#000"><rect x="482" y="64.6" width="1.2" height="1.2"/><rect x="488" y="66" width="1.2" height="1.2"/><rect x="493" y="66" width="1.2" height="1.2"/><rect x="495" y="68" width="1.2" height="1.2"/><rect x="482" y="70" width="1.2" height="1.2"/><rect x="481" y="75" width="1.2" height="1.2"/><rect x="486" y="77" width="1.2" height="1.2"/><rect x="491" y="76" width="1.2" height="1.2"/><rect x="483" y="79" width="1.2" height="1.2"/><rect x="492" y="74" width="1.2" height="1.2"/></g><g stroke="#000" stroke-width="1.1"><path d="M483.8 68.5h3.4M485.5 66.8v3.4"/><path d="M488.8 69.4h3.4M490.5 67.7v3.4"/><path d="M482.6 73.3h3.4M484.3 71.6v3.4"/><path d="M486.8 74.4h3.4M488.5 72.7v3.4"/></g><path d="M493.2 72.2H496.4Q498.8 72.2 498.8 74.8V76.2" fill="none" stroke="#000" stroke-width="2.2"/><path d="M495.4 75.8H502.2L498.8 78.8Z" fill="#000"/><rect x="491.75" y="80.65" width="9.5" height="4.5" fill="#e2e2e2" stroke="#000" stroke-width="1.3"/><rect x="492.40000000000003" y="81.3" width="8.200000000000001" height="1.2" fill="#fff"/><rect x="492.90000000000003" y="82" width="2" height="1.1" fill="#f00"/><g stroke="#000" stroke-width="0.9"><path d="M517.6 65.60000000000001l3.6 3.6M521.1999999999999 65.60000000000001l-3.6 3.6"/><path d="M525.7 66.3l3.6 3.6M529.3 66.3l-3.6 3.6"/><path d="M518.7 80.7l3.6 3.6M522.3 80.7l-3.6 3.6"/></g><g fill="#000"><rect x="538" y="71" width="1" height="1"/><rect x="536" y="75" width="1" height="1"/><rect x="532" y="78" width="1" height="1"/><rect x="536" y="81" width="1" height="1"/><rect x="532" y="83" width="1" height="1"/><rect x="527" y="85.5" width="1" height="1"/><rect x="536" y="85.5" width="1" height="1"/><rect x="523" y="73" width="1" height="1"/><rect x="529" y="75" width="1" height="1"/><rect x="520" y="77" width="1" height="1"/></g><path d="M521 74.6L527 83.5L536 66.8" fill="none" stroke="#f00" stroke-width="2.2" stroke-linejoin="round"/><path d="M545.6 71.4V65.6H551.8" fill="none" stroke="#000" stroke-width="1.1"/><path d="M547.5 67.3l3 3M550.5 67.3l-3 3" stroke="#000" stroke-width="1"/><path d="M547.3 84L554.4 73.6L561.5 84Z" fill="none" stroke="#0f0" stroke-width="1.1"/><path d="M550.5 77.5l7 6.5M557.5 77.5l-7 6.5" stroke="#000" stroke-width="0.9"/><text x="557.6" y="75.9" font-family="Liberation Sans" font-size="9.5" fill="#000">12</text><circle cx="592" cy="75.8" r="10" fill="#f00"/><text x="592" y="81.5" text-anchor="middle" font-family="Liberation Serif" font-weight="bold" font-size="15.5" fill="#fff">?</text><path d="M1105 68L1112.8 75.8H1108.6V82.4H1101.4V75.8H1097.2Z" fill="#0ff" stroke="#000" stroke-width="1.3" stroke-linejoin="miter"/><path d="M1133 83.8L1140.8 76H1136.6V69.3H1129.4V76H1125.2Z" fill="#0ff" stroke="#000" stroke-width="1.3" stroke-linejoin="miter"/></svg>
</div>
<div id="list">
<div class="vs" style="left:396px;top:1px;height:119px"></div>
<div class="vs" style="left:480px;top:1px;height:119px"></div>
<div class="vs" style="left:560px;top:1px;height:119px"></div>
<div class="vs" style="left:640px;top:1px;height:119px"></div>
<div class="vs" style="left:720px;top:1px;height:119px"></div>
<div class="vs" style="left:800px;top:1px;height:119px"></div>
<div class="vs" style="left:880px;top:1px;height:119px"></div>
<div class="vs" style="left:1084px;top:1px;height:23px"></div>
<div class="hs" style="left:2px;top:43px;width:1083px"></div>
<div class="hs" style="left:2px;top:62px;width:1083px"></div>
<div class="hs" style="left:2px;top:81px;width:1083px"></div>
<div class="hs" style="left:2px;top:100px;width:1083px"></div>
<div class="abs" style="left:22px;top:25px;width:698px;height:18px;background:#0078d7"></div>
<div class="abs" style="left:801px;top:25px;width:284px;height:18px;background:#0078d7"></div>
<div class="abs" style="left:22px;top:25px;width:698px;height:1px;background:repeating-linear-gradient(90deg,#f0a030 0 1px,#0078d7 1px 2px)"></div>
<div class="abs" style="left:801px;top:25px;width:284px;height:1px;background:repeating-linear-gradient(90deg,#f0a030 0 1px,#0078d7 1px 2px)"></div>
<div class="abs" style="left:721px;top:25px;width:78px;height:1px;background:repeating-linear-gradient(90deg,#000 0 1px,#fff 1px 2px)"></div>
<div class="abs" style="left:396px;top:25px;width:1px;height:18px;background:#fff"></div>
<div class="abs" style="left:480px;top:25px;width:1px;height:18px;background:#fff"></div>
<div class="abs" style="left:560px;top:25px;width:1px;height:18px;background:#fff"></div>
<div class="abs" style="left:640px;top:25px;width:1px;height:18px;background:#fff"></div>
<div class="abs" style="left:720px;top:25px;width:1px;height:18px;background:#fff"></div>
<div class="abs" style="left:800px;top:25px;width:1px;height:18px;background:#fff"></div>
<div class="abs" style="left:880px;top:25px;width:1px;height:18px;background:#fff"></div>
<div class="t" style="left:8px;top:6px;color:#000">Nimi</div>
<div class="t" style="left:396px;top:6px;width:84px;text-align:center;color:#000">Editoitu</div>
<div class="t" style="left:480px;top:6px;width:80px;text-align:center;color:#000">Käytössä</div>
<div class="t" style="left:560px;top:6px;width:80px;text-align:center;color:#000">Piilossa</div>
<div class="t" style="left:640px;top:6px;width:80px;text-align:center;color:#000">Asetukset</div>
<div class="t" style="left:720px;top:6px;width:80px;text-align:center;color:#000">Väri</div>
<div class="t" style="left:784px;top:6px;width:90px;text-align:right;color:#000">Pisteitä</div>
<div class="t" style="left:886px;top:6px;color:#000">Tyyppi</div>
<div class="abs" style="left:6px;top:28px;width:13px;height:13px;background:#0067c0;border-radius:3px"></div>
<svg class="abs" style="left:6px;top:28px" width="13" height="13" viewBox="0 0 13 13"><path d="M3 6.8 L5.4 9 L10 4" fill="none" stroke="#fff" stroke-width="1"/></svg>
<div class="t" style="left:24px;top:28px;color:#fff">puupino2.xy.tdw</div>
<div class="t" style="left:480px;top:28px;width:80px;text-align:center;color:#fff">[X]</div>
<div class="t" style="left:560px;top:28px;width:80px;text-align:center;color:#fff">[&nbsp;&nbsp;]</div>
<div class="t" style="left:640px;top:28px;width:80px;text-align:center;color:#fff">[&nbsp;&nbsp;]</div>
<svg class="abs" style="left:721px;top:26px" width="79" height="18"><rect x="0.6" y="0.6" width="77.2" height="15.8" rx="0.8" fill="#fff" stroke="#000" stroke-width="1.25"/></svg>
<div class="t" style="left:814px;top:28px;width:60px;text-align:right;color:#fff">1177</div>
<div class="t" style="left:886px;top:28px;color:#fff">Vektoritiedosto</div>
<div class="abs" style="left:6px;top:47px;width:11px;height:11px;background:#f3f3f3;border:1px solid #5a5a5a;border-radius:3px"></div>
<div class="t" style="left:24px;top:47px;color:#000">puupino2_kentta.mm1.tdw</div>
<div class="t" style="left:480px;top:47px;width:80px;text-align:center;color:#000">[X]</div>
<div class="t" style="left:560px;top:47px;width:80px;text-align:center;color:#000">[&nbsp;&nbsp;]</div>
<div class="t" style="left:640px;top:47px;width:80px;text-align:center;color:#000">[&nbsp;&nbsp;]</div>
<svg class="abs" style="left:721px;top:45px" width="79" height="18"><rect x="0.6" y="0.6" width="77.2" height="15.8" rx="0.8" fill="#fff" stroke="#000" stroke-width="1.25"/></svg>
<div class="t" style="left:814px;top:47px;width:60px;text-align:right;color:#000">310</div>
<div class="t" style="left:886px;top:47px;color:#000">Maastomalli, Pinta 1, Maanpinta</div>
<div class="abs" style="left:0px;top:0px;width:1px;height:120px;background:#6f7480"></div>
<div class="abs" style="left:1086px;top:0px;width:1px;height:120px;background:#6f7480"></div>
</div>
<div id="status">
<div class="abs" style="left:395px;top:0px;width:1px;height:18px;background:#6e6e6e"></div>
<div class="abs" style="left:479px;top:0px;width:1px;height:18px;background:#6e6e6e"></div>
<div class="abs" style="left:559px;top:0px;width:1px;height:18px;background:#6e6e6e"></div>
<div class="abs" style="left:639px;top:0px;width:1px;height:18px;background:#6e6e6e"></div>
<div class="abs" style="left:719px;top:0px;width:1px;height:18px;background:#6e6e6e"></div>
<div class="abs" style="left:799px;top:0px;width:1px;height:18px;background:#6e6e6e"></div>
<div class="abs" style="left:879px;top:0px;width:1px;height:18px;background:#6e6e6e"></div>
<div class="t" style="left:7px;top:2px">1 / 2</div>
<div class="t" style="left:479px;top:2px;width:80px;text-align:center">2</div>
<div class="t" style="left:789px;top:2px;width:86px;text-align:right">1487 / 1487</div>
</div>
</div>
</body></html>
